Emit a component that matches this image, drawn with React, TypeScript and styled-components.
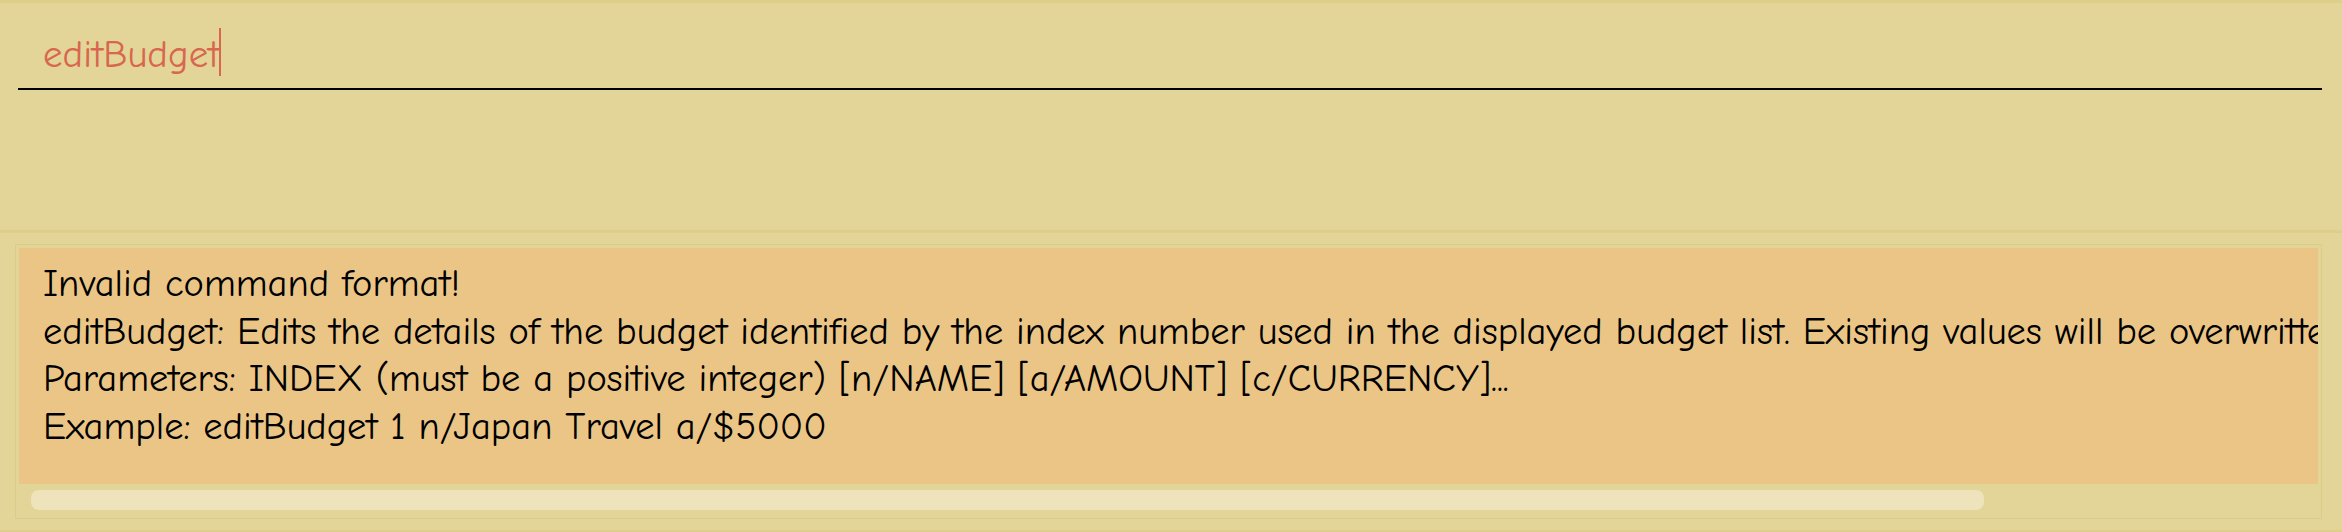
import { useLayoutEffect, useRef, useState } from "react";
import styled, { createGlobalStyle } from "styled-components";

const GlobalStyle = createGlobalStyle`
  html, body {
    margin: 0;
    padding: 0;
    background: #e2d597;
  }
  * {
    box-sizing: border-box;
  }
`;

const Window = styled.div`
  width: 2342px;
  height: 532px;
  display: flex;
  flex-direction: column;
  background: #e2d597;
  font-family: "Comic Sans MS", "Comic Neue", "DejaVu Sans", sans-serif;
  overflow: hidden;
`;

const CommandBox = styled.div`
  height: 230px;
  border-top: 3px solid #ddcf89;
  padding: 25px 20px 0 18px;
`;

const CommandField = styled.div`
  height: 62px;
  display: flex;
  align-items: flex-start;
  padding-left: 25px;
  border-bottom: 2px solid #000;
`;

const CommandText = styled.span`
  font-size: 39px;
  line-height: 48px;
  padding-top: 3px;
  color: #d9664f;
  white-space: pre;
`;

const Caret = styled.span`
  width: 2px;
  height: 48px;
  background: #d9664f;
`;

const ResultSection = styled.div`
  flex: 1;
  border-top: 3px solid #ddcf89;
  border-bottom: 2px solid #ddcf89;
  padding: 11px 20px 11px 15px;
`;

const ResultFrame = styled.div`
  height: 275px;
  border: 1px solid #dccd86;
  padding: 3px;
  display: flex;
  flex-direction: column;
`;

const ResultViewport = styled.div`
  height: 236px;
  overflow: hidden;
  background: #ebc586;
`;

const ResultText = styled.div`
  display: inline-block;
  min-width: 100%;
  padding: 12px 24px 0 24px;
  font-size: 38.5px;
  line-height: 47.5px;
  color: #000;
  white-space: pre;
`;

const ResultLine = styled.div``;

const ScrollTrack = styled.div`
  flex: 1;
  padding: 6px 12px 5px 12px;
`;

const ScrollThumb = styled.div`
  height: 20px;
  border-radius: 8px;
  background: #efe3bb;
`;

const feedback = [
  "Invalid command format!",
  "editBudget: Edits the details of the budget identified by the index number used in the displayed budget list. Existing values will be overwritten by the input values.",
  "Parameters: INDEX (must be a positive integer) [n/NAME] [a/AMOUNT] [c/CURRENCY]...",
  "Example: editBudget 1 n/Japan Travel a/$5000",
];

export default function App() {
  const viewportRef = useRef<HTMLDivElement>(null);
  const [thumbRatio, setThumbRatio] = useState(0.853);

  useLayoutEffect(() => {
    const el = viewportRef.current;
    if (!el || el.scrollWidth === 0) return;
    setThumbRatio(Math.min(1, el.clientWidth / el.scrollWidth));
  }, []);

  return (
    <>
      <GlobalStyle />
      <Window>
        <CommandBox>
          <CommandField>
            <CommandText>editBudget</CommandText>
            <Caret />
          </CommandField>
        </CommandBox>
        <ResultSection>
          <ResultFrame>
            <ResultViewport ref={viewportRef}>
              <ResultText>
                {feedback.map((line) => (
                  <ResultLine key={line}>{line}</ResultLine>
                ))}
              </ResultText>
            </ResultViewport>
            <ScrollTrack>
              <ScrollThumb style={{ width: `${thumbRatio * 100}%` }} />
            </ScrollTrack>
          </ResultFrame>
        </ResultSection>
      </Window>
    </>
  );
}
